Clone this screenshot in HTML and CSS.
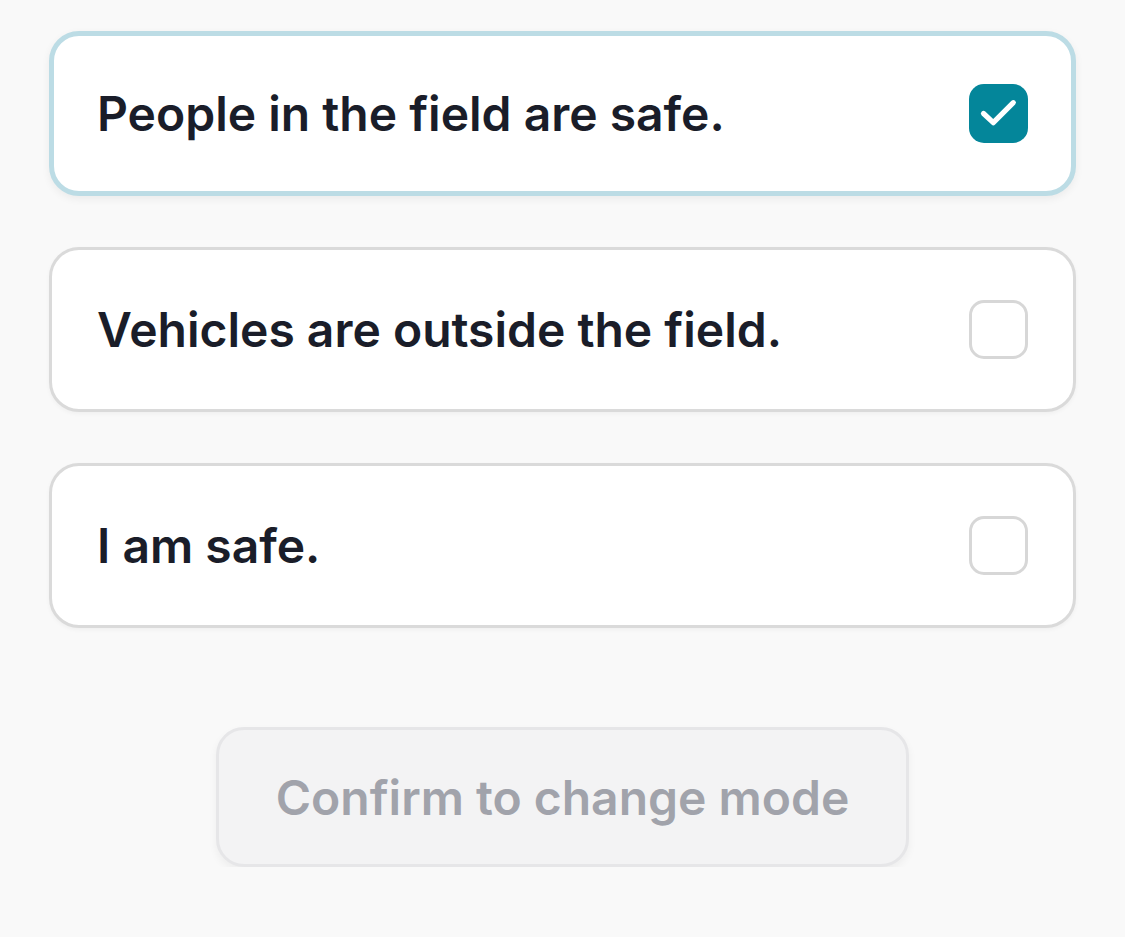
FILE: index.html
```html
<!DOCTYPE html>
<html lang="en">
<head>
<meta charset="utf-8">
<title>Confirm safety</title>
<link rel="stylesheet" href="styles.css">
</head>
<body>
<main class="page">
  <div class="list">
    <label class="card card-checked">
      <span class="label">People in the field are safe.</span>
      <span class="box box-checked">
        <svg viewBox="0 0 59 59" width="59" height="59"><path d="M14.5 29.5 L24.3 38.7 L44.3 18.7" fill="none" stroke="#fff" stroke-width="5.2" stroke-linecap="round" stroke-linejoin="round"/></svg>
      </span>
    </label>
    <label class="card">
      <span class="label">Vehicles are outside the field.</span>
      <span class="box"></span>
    </label>
    <label class="card">
      <span class="label">I am safe.</span>
      <span class="box"></span>
    </label>
  </div>
  <div class="actions">
    <button class="confirm" type="button" disabled>Confirm to change mode</button>
  </div>
</main>
</body>
</html>
```
FILE: styles.css
```css
* { box-sizing: border-box; }
html, body { margin: 0; padding: 0; }
body {
  background: #f9f9f9;
  font-family: Inter, "Noto Sans", sans-serif;
  color: #1a1d29;
}
.page {
  padding: 31px 49px 0;
}
.list {
  display: flex;
  flex-direction: column;
  gap: 51px;
}
.card {
  height: 165px;
  display: flex;
  align-items: center;
  justify-content: space-between;
  background: #ffffff;
  border: 3px solid #dadada;
  border-radius: 30px;
  padding: 0 45px;
  box-shadow: 0 2px 4px rgba(0, 0, 0, 0.04);
}
.card-checked {
  border: 5px solid #bcdce5;
  padding: 0 43px;
  box-shadow: 0 3px 8px rgba(0, 0, 0, 0.06);
}
.label {
  font-size: 48px;
  font-weight: 600;
  letter-spacing: 0;
  color: #1a1d29;
}
.box {
  width: 59px;
  height: 59px;
  border-radius: 15px;
  border: 3px solid #d7d7d7;
  background: #ffffff;
  flex: none;
  display: block;
}
.box-checked {
  border: none;
  background: #04869a;
}
.box-checked svg { display: block; }
.actions {
  display: flex;
  justify-content: center;
  margin-top: 99px;
}
.confirm {
  width: 693px;
  height: 140px;
  border: 3px solid #e6e6e8;
  border-radius: 28px;
  background: #f3f3f4;
  font-family: Inter, "Noto Sans", sans-serif;
  font-size: 48px;
  font-weight: 600;
  color: #a1a3ab;
  box-shadow: 0 4px 8px rgba(0, 0, 0, 0.05);
  padding: 0;
}
```
